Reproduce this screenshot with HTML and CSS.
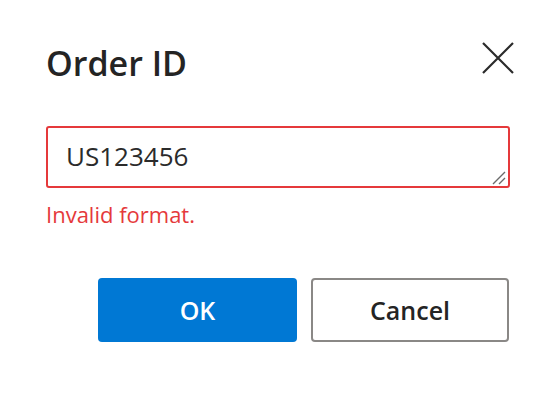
FILE: index.html
```html
<!DOCTYPE html>
<html lang="en">

<head>
    <meta charset="UTF-8">
    <meta name="viewport" content="width=device-width, initial-scale=1.0">
    <title>Order ID</title>
    <link rel="stylesheet" href="styles.css">
</head>

<body>
    <main class="dialog">
        <div class="dialog-header">
            <h1 class="title">Order ID</h1>
            <button class="close-btn" aria-label="Close">
                <svg width="32" height="32" viewBox="0 0 32 32">
                    <path d="M1 1 L31 31 M31 1 L1 31" stroke="#2b2b2b" stroke-width="2.2" fill="none" />
                </svg>
            </button>
        </div>
        <div class="field">
            <textarea class="textbox" spellcheck="false">US123456</textarea>
            <svg class="grip" width="14" height="14" viewBox="0 0 14 14">
                <path d="M1 13 L13 1 M7 13 L13 7" stroke="#6b6b6b" stroke-width="1.4" fill="none" />
            </svg>
        </div>
        <div class="error-msg">Invalid format.</div>
        <div class="buttons">
            <button class="btn btn-primary">OK</button>
            <button class="btn btn-default">Cancel</button>
        </div>
    </main>
</body>

</html>
```

FILE: styles.css
```css
* {
    padding: 0px;
    margin: 0px;
    box-sizing: border-box;
}

body {
    background-color: #ffffff;
    font-family: 'Segoe UI', 'Open Sans', sans-serif;
    color: #242424;
}

.dialog {
    width: 556px;
    height: 396px;
    padding: 41px 47px 0 46px;
}

.dialog-header {
    display: flex;
    justify-content: space-between;
    align-items: flex-start;
}

.title {
    font-size: 34px;
    font-weight: 600;
    line-height: 44px;
}

.close-btn {
    border: none;
    background: none;
    width: 32px;
    height: 32px;
    margin-top: 1px;
    margin-right: -5px;
    cursor: pointer;
}

.close-btn svg {
    display: block;
}

.field {
    position: relative;
    width: 464px;
    margin-top: 41px;
}

.textbox {
    display: block;
    width: 464px;
    height: 62px;
    padding: 10px 18px;
    border: 2px solid #e5393b;
    border-radius: 3px;
    font-family: 'Segoe UI', 'Open Sans', sans-serif;
    font-size: 26px;
    line-height: 36px;
    color: #2b2b2b;
    resize: none;
    overflow: hidden;
    outline: none;
}

.grip {
    position: absolute;
    right: 4px;
    bottom: 3px;
}

.error-msg {
    margin-top: 12px;
    font-size: 22px;
    line-height: 28px;
    color: #e5393b;
}

.buttons {
    display: flex;
    justify-content: flex-end;
    gap: 14px;
    margin-top: 50px;
}

.btn {
    width: 199px;
    height: 64px;
    border-radius: 4px;
    font-family: 'Segoe UI', 'Open Sans', sans-serif;
    font-size: 25px;
    font-weight: 600;
    cursor: pointer;
}

.btn-primary {
    border: none;
    background-color: #0078d4;
    color: #ffffff;
}

.btn-default {
    width: 198px;
    border: 2px solid #8a8886;
    background-color: #ffffff;
    color: #242424;
}
```
